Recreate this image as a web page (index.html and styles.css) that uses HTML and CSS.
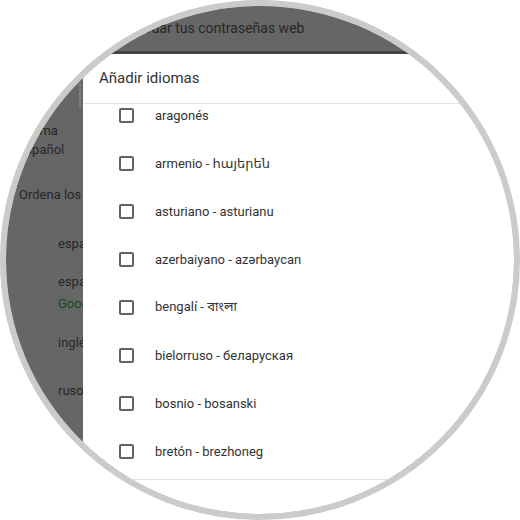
FILE: index.html
```html
<!DOCTYPE html>
<html lang="es">
<head>
<meta charset="utf-8">
<title>Añadir idiomas</title>
<link rel="stylesheet" href="styles.css">
</head>
<body>
<div class="lens">
  <div class="page">
    <div class="topbar">Guardar tus contraseñas web</div>
    <div class="main">
      <div class="side">
        <div class="mark"></div>
        <div class="sec-title first">Idioma</div>
        <div class="sec-title">Español</div>
        <div class="hint">Ordena los idiomas según tus preferencias</div>
        <div class="lang-row r1">español</div>
        <div class="rule"></div>
        <div class="lang-row r2"><div class="ln">español</div><div class="ln green">Google Chrome se muestra en este idioma</div></div>
        <div class="rule"></div>
        <div class="lang-row r3">inglés</div>
        <div class="rule"></div>
        <div class="lang-row r3">ruso</div>
        <div class="rule"></div>
      </div>
      <div class="dialog">
        <div class="dlg-head">Añadir idiomas</div>
        <div class="dlg-body">
          <ul class="dlg-list">
            <li class="item"><span class="box"></span><span class="label">aragonés</span></li>
            <li class="item"><span class="box"></span><span class="label">armenio - հայերեն</span></li>
            <li class="item"><span class="box"></span><span class="label">asturiano - asturianu</span></li>
            <li class="item"><span class="box"></span><span class="label">azerbaiyano - azərbaycan</span></li>
            <li class="item"><span class="box"></span><span class="label">bengalí - বাংলা</span></li>
            <li class="item"><span class="box"></span><span class="label">bielorruso - беларуская</span></li>
            <li class="item"><span class="box"></span><span class="label">bosnio - bosanski</span></li>
            <li class="item"><span class="box"></span><span class="label">bretón - brezhoneg</span></li>
            <li class="item"><span class="box"></span><span class="label">búlgaro - български</span></li>
          </ul>
        </div>
        <div class="dlg-foot"></div>
      </div>
    </div>
  </div>
</div>
</body>
</html>
```
FILE: styles.css
```css
html, body {
  margin: 0;
  padding: 0;
  background: #ffffff;
}

body {
  width: 520px;
  height: 520px;
  font-family: Roboto, "Noto Sans", "Noto Sans Bengali", "DejaVu Sans", sans-serif;
}

.lens {
  width: 520px;
  height: 520px;
  box-sizing: border-box;
  border: 6px solid #cbcbcb;
  border-radius: 50%;
  overflow: hidden;
  background: #666666;
}

.page {
  width: 508px;
  height: 508px;
  display: flex;
  flex-direction: column;
  background: #666666;
}

.topbar {
  height: 45px;
  line-height: 45px;
  padding-left: 116px;
  font-size: 14px;
  color: #262626;
  white-space: nowrap;
  border-bottom: 3px solid #434343;
}

.main {
  flex: 1;
  display: flex;
  min-height: 0;
}

.side {
  width: 77px;
  flex: none;
  overflow: hidden;
  padding-left: 12px;
  box-sizing: border-box;
  font-size: 13px;
  color: #262626;
  white-space: nowrap;
}

.mark {
  margin-top: 29px;
  margin-left: 61px;
  width: 2px;
  height: 24px;
  background: #7d7d7d;
}

.sec-title {
  line-height: 19px;
}

.sec-title.first {
  margin-top: 14px;
}

.hint {
  margin-top: 26px;
  line-height: 19px;
  padding-left: 1px;
}

.hint + .lang-row {
  margin-top: 16px;
}

.lang-row {
  padding-left: 40px;
}

.lang-row.r1 {
  height: 48px;
  line-height: 48px;
}

.lang-row.r2 {
  height: 49px;
  box-sizing: border-box;
  padding-top: 2px;
}

.lang-row.r2 .ln {
  line-height: 22px;
}

.lang-row.r3 {
  height: 47px;
  line-height: 47px;
}

.green {
  color: #0f4a25;
}

.rule {
  height: 1px;
  margin-left: 61px;
  background: #5a5a5a;
}

.dialog {
  flex: 1;
  display: flex;
  flex-direction: column;
  background: #ffffff;
  min-width: 0;
}

.dlg-head {
  height: 49px;
  line-height: 49px;
  padding-left: 16px;
  font-size: 15px;
  color: #333333;
  border-bottom: 1px solid #e2e2e2;
  flex: none;
}

.dlg-body {
  height: 375px;
  overflow: hidden;
  flex: none;
}

.dlg-list {
  list-style: none;
  margin: -13px 0 0 0;
  padding: 0;
}

.item {
  height: 48px;
  display: flex;
  align-items: center;
  padding-left: 36px;
  gap: 21px;
}

.box {
  width: 15px;
  height: 15px;
  box-sizing: border-box;
  border: 2px solid #636363;
  border-radius: 2px;
  flex: none;
}

.label {
  font-size: 13px;
  color: #333333;
  white-space: nowrap;
}

.dlg-foot {
  flex: 1;
  border-top: 1px solid #e2e2e2;
}
```
